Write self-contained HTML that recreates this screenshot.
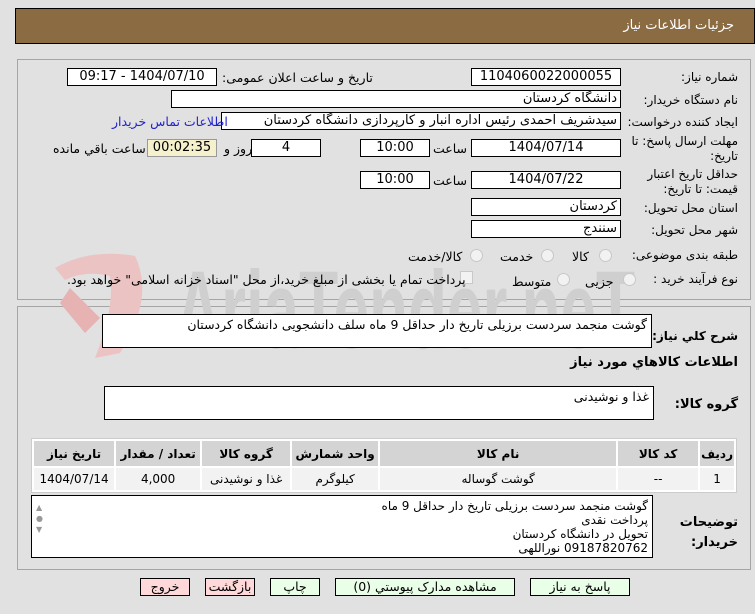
<!DOCTYPE html>
<html><head><meta charset="utf-8"><style>
body{margin:0;width:755px;height:614px;background:#e1e1e1;font-family:Tahoma,"DejaVu Sans",sans-serif;font-size:12px;color:#000;position:relative;overflow:hidden;direction:rtl}
.a{position:absolute;white-space:nowrap}
.hdr{left:15px;top:8px;width:738px;height:34px;background:#8b6b42;border:1px solid #000}
.hdr span{position:absolute;right:20px;top:9px;color:#fff;font-size:13px}
.pan{position:absolute;left:17px;width:732px;border:1px solid #a5a5a5}
.box{position:absolute;background:#fff;border:1px solid #000;box-sizing:border-box;height:18px;font-size:13px;text-align:center;line-height:16px}
.box.r{text-align:right;padding-right:3px}
.lbl{position:absolute;right:17px;white-space:nowrap;font-size:12px}
.rad{position:absolute;width:11px;height:11px;border-radius:50%;border:1px solid #c8c8c8;background:#f2f2f2}
.ta{position:absolute;background:#fff;border:1px solid #000;box-sizing:border-box;text-align:right;padding:2px 4px;font-size:12.5px}
table{position:absolute;left:31px;top:438px;width:706px;border-collapse:separate;border-spacing:2px;background:#fff;border:1px solid #ccc;font-size:12px}
th{background:#d4d4d4;height:23px;font-weight:bold}
td{background:#f2f2f2;height:20px;text-align:center}
.btn{position:absolute;top:578px;height:18px;border:1px solid #000;box-sizing:border-box;text-align:center;line-height:16px;font-size:12.5px}
.g{background:#eaffe8}.p{background:#ffd9d9}
</style></head><body>
<div class="a hdr"><span>جزئیات اطلاعات نیاز</span></div>

<div class="pan" style="top:59px;height:239px"></div>
<div class="pan" style="top:306px;height:262px"></div>

<svg class="a" style="left:15px;top:248px" width="740" height="110" viewBox="0 0 740 110">
<path d="M40 20 Q75 0 120 8 Q140 50 105 105 L80 110 Q100 60 95 28 Q70 22 50 32 Z" fill="#ebc3c3"/>
<path d="M55 40 L85 70 L70 85 L45 55 Z" fill="#e6b2b2"/>
<text x="160" y="100" font-family="Liberation Sans" font-weight="bold" font-size="110" fill="#cfcfcf" textLength="460" lengthAdjust="spacingAndGlyphs" direction="ltr">AriaTender.neT</text>
</svg>

<div class="lbl" style="top:70px">شماره نیاز:</div>
<div class="box" style="left:471px;top:68px;width:150px">1104060022000055</div>
<div class="a" style="left:222px;top:70px;font-size:12.5px">تاریخ و ساعت اعلان عمومی:</div>
<div class="box" style="left:67px;top:68px;width:150px">1404/07/10 - 09:17</div>

<div class="lbl" style="top:93px">نام دستگاه خریدار:</div>
<div class="box r" style="left:171px;top:90px;width:450px">دانشگاه کردستان</div>

<div class="lbl" style="top:115px">ایجاد کننده درخواست:</div>
<div class="box r" style="left:221px;top:112px;width:400px">سیدشریف احمدی رئیس اداره انبار و کارپردازی دانشگاه کردستان</div>
<div class="a" style="left:112px;top:114px;color:#2222cc;font-size:12.5px">اطلاعات تماس خریدار</div>

<div class="lbl" style="top:134px;line-height:15px">مهلت ارسال پاسخ: تا<br>تاریخ:</div>
<div class="box" style="left:471px;top:139px;width:150px">1404/07/14</div>
<div class="a" style="left:433px;top:141px;font-size:12.5px">ساعت</div>
<div class="box" style="left:360px;top:139px;width:70px">10:00</div>
<div class="box" style="left:251px;top:139px;width:70px">4</div>
<div class="a" style="left:224px;top:141px;font-size:12.5px">روز و</div>
<div class="box" style="left:147px;top:139px;width:70px;background:#f4f1cc;border-color:#999">00:02:35</div>
<div class="a" style="left:53px;top:141px;font-size:12.5px">ساعت باقي مانده</div>

<div class="lbl" style="top:167px;line-height:15px">حداقل تاریخ اعتبار<br>قیمت: تا تاریخ:</div>
<div class="box" style="left:471px;top:171px;width:150px">1404/07/22</div>
<div class="a" style="left:433px;top:173px;font-size:12.5px">ساعت</div>
<div class="box" style="left:360px;top:171px;width:70px">10:00</div>

<div class="lbl" style="top:201px">استان محل تحویل:</div>
<div class="box r" style="left:471px;top:198px;width:150px">کردستان</div>
<div class="lbl" style="top:223px">شهر محل تحویل:</div>
<div class="box r" style="left:471px;top:220px;width:150px">سنندج</div>

<div class="lbl" style="top:248px">طبقه بندی موضوعی:</div>
<div class="rad" style="left:599px;top:249px"></div>
<div class="a" style="left:572px;top:249px;font-size:12.5px">کالا</div>
<div class="rad" style="left:541px;top:249px"></div>
<div class="a" style="left:500px;top:249px;font-size:12.5px">خدمت</div>
<div class="rad" style="left:470px;top:249px"></div>
<div class="a" style="left:408px;top:249px;font-size:12.5px">کالا/خدمت</div>

<div class="lbl" style="top:272px">نوع فرآیند خرید :</div>
<div class="rad" style="left:623px;top:273px"></div>
<div class="a" style="left:585px;top:274px;font-size:12.5px">جزیی</div>
<div class="rad" style="left:557px;top:273px"></div>
<div class="a" style="left:512px;top:274px;font-size:12.5px">متوسط</div>
<div class="a" style="left:460px;top:271px;width:11px;height:11px;border:1px solid #c8c8c8;background:#f2f2f2"></div>
<div class="a" style="left:67px;top:272px;font-size:12.5px">پرداخت تمام یا بخشی از مبلغ خرید،از محل "اسناد خزانه اسلامی" خواهد بود.</div>

<div class="lbl" style="top:329px;font-weight:bold;font-size:12px">شرح کلي نیاز:</div>
<div class="ta" style="left:102px;top:314px;width:550px;height:34px">گوشت منجمد سردست برزیلی تاریخ دار حداقل 9 ماه سلف دانشجویی دانشگاه کردستان</div>
<div class="lbl" style="top:355px;font-weight:bold;font-size:13px">اطلاعات کالاهاي مورد نیاز</div>
<div class="lbl" style="top:397px;font-weight:bold;font-size:13px">گروه کالا:</div>
<div class="ta" style="left:104px;top:386px;width:550px;height:34px">غذا و نوشیدنی</div>

<table><tr><th style="width:26px">ردیف</th><th style="width:78px">کد کالا</th><th style="width:234px">نام کالا</th><th style="width:84px">واحد شمارش</th><th style="width:86px">گروه کالا</th><th style="width:82px">تعداد / مقدار</th><th>تاریخ نیاز</th></tr>
<tr><td>1</td><td>--</td><td>گوشت گوساله</td><td>کیلوگرم</td><td>غذا و نوشیدنی</td><td>4,000</td><td>1404/07/14</td></tr></table>

<div class="lbl" style="top:513px;font-weight:bold;font-size:13px;line-height:20px">توضیحات<br>خریدار:</div>
<div class="ta" style="left:31px;top:495px;width:622px;height:63px;line-height:14px;font-size:12px;padding-top:3px">گوشت منجمد سردست برزیلی تاریخ دار حداقل 9 ماه<br>پرداخت نقدی<br>تحویل در دانشگاه کردستان<br>09187820762 نوراللهی</div>
<div class="a" style="left:36px;top:502px;color:#999;font-size:8px;line-height:11px;direction:ltr">▲<br>●<br>▼</div>

<div class="btn g" style="left:530px;width:100px">پاسخ به نیاز</div>
<div class="btn g" style="left:335px;width:180px">مشاهده مدارک پیوستي (0)</div>
<div class="btn g" style="left:270px;width:50px">چاپ</div>
<div class="btn p" style="left:205px;width:50px">بازگشت</div>
<div class="btn p" style="left:140px;width:50px">خروج</div>
</body></html>
